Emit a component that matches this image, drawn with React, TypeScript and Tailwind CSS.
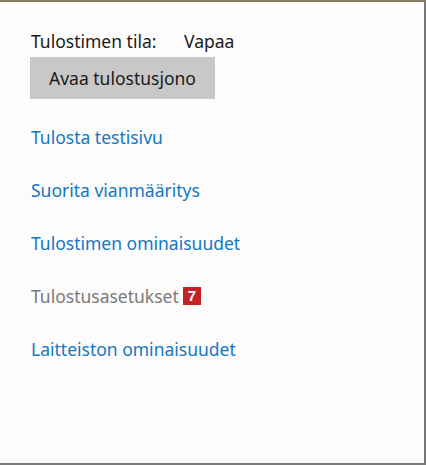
const links = [
  { label: 'Tulosta testisivu' },
  { label: 'Suorita vianmääritys' },
  { label: 'Tulostimen ominaisuudet' },
  { label: 'Tulostusasetukset', disabled: true, badge: '7' },
  { label: 'Laitteiston ominaisuudet' },
];

export default function App() {
  return (
    <div className="h-[465px] w-[426px] border-t-2 border-r-2 border-b-2 border-t-[#8a7e62] border-r-[#777777] border-b-[#7a7a7a] bg-[#fcfcfc] font-['Noto_Sans',sans-serif] text-[17.5px]">
      <div className="pl-[31px] pt-[27px]">
        <div className="flex h-[24px] items-center text-[#1b1b1b]">
          <span className="w-[153px]">Tulostimen tila:</span>
          <span>Vapaa</span>
        </div>
        <button className="ml-[-1px] mt-[4px] flex h-[42px] w-[185px] items-center justify-center bg-[#c8c8c8] text-[#1b1b1b]">
          Avaa tulostusjono
        </button>
        <ul className="mt-[26px] flex flex-col gap-[29px]">
          {links.map((item) => (
            <li key={item.label} className="flex h-[24px] items-center gap-[4px]">
              <span className={item.disabled ? 'text-[#7a7a7a]' : 'text-[#1478c4]'}>{item.label}</span>
              {item.badge ? (
                <span className="flex h-[18px] w-[18px] items-center justify-center bg-[#c42026] font-['Liberation_Sans',sans-serif] text-[15px] font-bold text-white">
                  {item.badge}
                </span>
              ) : null}
            </li>
          ))}
        </ul>
      </div>
    </div>
  );
}
